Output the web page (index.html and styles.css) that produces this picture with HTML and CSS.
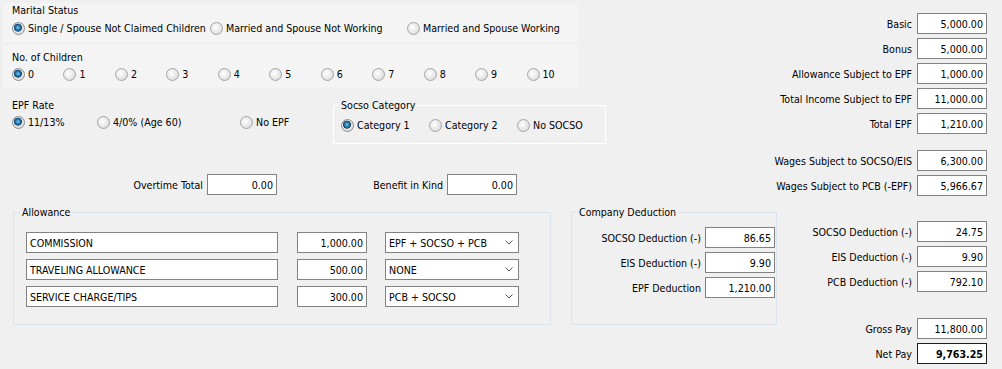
FILE: index.html
```html
<!DOCTYPE html>
<html>
<head>
    <meta charset="utf-8">
    <title>Payroll Calculator</title>
    <link rel="stylesheet" href="styles.css">
</head>
<body>
    <div class="form">
        <div class="left">
            <div class="panel marital">
                <div class="caption">Marital Status</div>
                <div class="opts marital-opts">
                    <label class="opt"><span class="radio checked"></span>Single / Spouse Not Claimed Children</label>
                    <label class="opt"><span class="radio"></span>Married and Spouse Not Working</label>
                    <label class="opt"><span class="radio"></span>Married and Spouse Working</label>
                </div>
            </div>
            <div class="panel children">
                <div class="caption">No. of Children</div>
                <div class="opts children-opts">
                    <label class="opt"><span class="radio checked"></span>0</label>
                    <label class="opt"><span class="radio"></span>1</label>
                    <label class="opt"><span class="radio"></span>2</label>
                    <label class="opt"><span class="radio"></span>3</label>
                    <label class="opt"><span class="radio"></span>4</label>
                    <label class="opt"><span class="radio"></span>5</label>
                    <label class="opt"><span class="radio"></span>6</label>
                    <label class="opt"><span class="radio"></span>7</label>
                    <label class="opt"><span class="radio"></span>8</label>
                    <label class="opt"><span class="radio"></span>9</label>
                    <label class="opt"><span class="radio"></span>10</label>
                </div>
            </div>
            <div class="epf-row">
                <div class="panel epf">
                    <div class="caption">EPF Rate</div>
                    <div class="opts epf-opts">
                        <label class="opt"><span class="radio checked"></span>11/13%</label>
                        <label class="opt"><span class="radio"></span>4/0% (Age 60)</label>
                        <label class="opt"><span class="radio"></span>No EPF</label>
                    </div>
                </div>
                <fieldset class="group socso">
                    <legend>Socso Category</legend>
                    <div class="opts socso-opts">
                        <label class="opt"><span class="radio checked"></span>Category 1</label>
                        <label class="opt"><span class="radio"></span>Category 2</label>
                        <label class="opt"><span class="radio"></span>No SOCSO</label>
                    </div>
                </fieldset>
            </div>
            <div class="extra-row">
                <div class="field overtime">
                    <span>Overtime Total</span>
                    <input type="text" class="num" value="0.00">
                </div>
                <div class="field bik">
                    <span>Benefit in Kind</span>
                    <input type="text" class="num" value="0.00">
                </div>
            </div>
            <div class="groups">
                <fieldset class="group allowance">
                    <legend>Allowance</legend>
                    <div class="allow-row">
                        <input type="text" class="name" value="COMMISSION">
                        <input type="text" class="num" value="1,000.00">
                        <div class="combo"><span>EPF + SOCSO + PCB</span><svg width="8" height="5" viewBox="0 0 8 5"><path d="M0.5 0.5 L4 4 L7.5 0.5" fill="none" stroke="#555" stroke-width="1"/></svg></div>
                    </div>
                    <div class="allow-row">
                        <input type="text" class="name" value="TRAVELING ALLOWANCE">
                        <input type="text" class="num" value="500.00">
                        <div class="combo"><span>NONE</span><svg width="8" height="5" viewBox="0 0 8 5"><path d="M0.5 0.5 L4 4 L7.5 0.5" fill="none" stroke="#555" stroke-width="1"/></svg></div>
                    </div>
                    <div class="allow-row">
                        <input type="text" class="name" value="SERVICE CHARGE/TIPS">
                        <input type="text" class="num" value="300.00">
                        <div class="combo"><span>PCB + SOCSO</span><svg width="8" height="5" viewBox="0 0 8 5"><path d="M0.5 0.5 L4 4 L7.5 0.5" fill="none" stroke="#555" stroke-width="1"/></svg></div>
                    </div>
                </fieldset>
                <fieldset class="group company">
                    <legend>Company Deduction</legend>
                    <div class="field"><span>SOCSO Deduction (-)</span><input type="text" class="num" value="86.65"></div>
                    <div class="field"><span>EIS Deduction (-)</span><input type="text" class="num" value="9.90"></div>
                    <div class="field"><span>EPF Deduction</span><input type="text" class="num" value="1,210.00"></div>
                </fieldset>
            </div>
        </div>

        <div class="right">
            <div class="rgroup">
                <div class="field"><span>Basic</span><input type="text" class="num" value="5,000.00"></div>
                <div class="field"><span>Bonus</span><input type="text" class="num" value="5,000.00"></div>
                <div class="field"><span>Allowance Subject to EPF</span><input type="text" class="num" value="1,000.00"></div>
                <div class="field"><span>Total Income Subject to EPF</span><input type="text" class="num" value="11,000.00"></div>
                <div class="field"><span>Total EPF</span><input type="text" class="num" value="1,210.00"></div>
            </div>
            <div class="rgroup wages">
                <div class="field"><span>Wages Subject to SOCSO/EIS</span><input type="text" class="num" value="6,300.00"></div>
                <div class="field"><span>Wages Subject to PCB (-EPF)</span><input type="text" class="num" value="5,966.67"></div>
            </div>
            <div class="rgroup deductions">
                <div class="field"><span>SOCSO Deduction (-)</span><input type="text" class="num" value="24.75"></div>
                <div class="field"><span>EIS Deduction (-)</span><input type="text" class="num" value="9.90"></div>
                <div class="field"><span>PCB Deduction (-)</span><input type="text" class="num" value="792.10"></div>
            </div>
            <div class="rgroup totals">
                <div class="field"><span>Gross Pay</span><input type="text" class="num" value="11,800.00"></div>
                <div class="field"><span>Net Pay</span><input type="text" class="num net" value="9,763.25"></div>
            </div>
        </div>
    </div>
</body>
</html>
```

FILE: styles.css
```css
body {
    margin: 0;
    padding: 0;
    background-color: #f0f0f0;
    font-family: "DejaVu Sans Condensed", "Liberation Sans", Arial, sans-serif;
    font-size: 10.6px;
    color: #000;
}
.form {
    display: grid;
    grid-template-columns: 760px 1fr;
    height: 369px;
}
.left {
    display: flex;
    flex-direction: column;
    width: 780px;
}
.panel {
    box-sizing: border-box;
    padding-left: 9px;
}
.caption {
    line-height: 13px;
    height: 13px;
}
.marital {
    margin: 3px 0 0 3px;
    width: 575px;
    height: 39px;
    padding-top: 1px;
    background-color: #f4f4f4;
}
.children {
    margin: 3px 0 0 3px;
    width: 575px;
    height: 43px;
    padding-top: 6px;
    background-color: #f4f4f4;
}
.opts {
    display: flex;
    align-items: center;
    height: 16px;
    margin-top: 3px;
}
.children .opts {
    margin-top: 2px;
}
.opt {
    display: flex;
    align-items: center;
    gap: 3px;
    white-space: nowrap;
}
.marital-opts .opt:nth-child(1) { width: 198px; }
.marital-opts .opt:nth-child(2) { width: 197px; }
.children-opts .opt { width: 53px; }
.radio {
    display: inline-block;
    width: 13px;
    height: 13px;
    box-sizing: border-box;
    border-radius: 50%;
    border: 1px solid #a4a4a4;
    background: radial-gradient(circle at 40% 40%, #ffffff 0, #f2f2f2 30%, #d2d2d2 100%);
    flex-shrink: 0;
}
.radio.checked {
    border-color: #8c8c8c;
    background:
        radial-gradient(circle at 45% 42%, #8fd3f5 0, #2f86b8 1.8px, #1c5a86 3.2px, #1a4e77 3.8px, rgba(0,0,0,0) 4.3px),
        radial-gradient(circle at 40% 40%, #ffffff 0, #f2f2f2 30%, #d2d2d2 100%);
}
.epf-row {
    display: flex;
    margin-top: 11px;
}
.epf {
    margin-left: 3px;
    width: 300px;
    padding-top: 0;
}
.epf .opts {
    margin-top: 2px;
}
.epf-opts .opt:nth-child(1) { width: 85px; }
.epf-opts .opt:nth-child(2) { width: 143px; }
.group {
    margin: 0;
    padding: 0;
    border: 1px solid #dce5ed;
    min-width: 0;
    box-sizing: border-box;
}
.group legend {
    padding: 0 2px;
    margin-left: 5px;
    line-height: 13px;
}
.socso {
    margin-left: 30px;
    width: 273px;
    height: 45px;
    border-color: #ffffff;
    padding: 5px 0 0 7px;
}
.socso legend {
    margin-left: -2px;
}
.socso-opts {
    margin-top: 0;
}
.socso-opts .opt:nth-child(1) { width: 88px; }
.socso-opts .opt:nth-child(2) { width: 88px; }
.extra-row {
    display: flex;
    margin-top: 30px;
}
.field {
    display: flex;
    align-items: center;
    justify-content: flex-end;
    gap: 4px;
    white-space: nowrap;
}
.overtime { width: 277px; }
.bik { width: 240px; }
input {
    font-family: inherit;
    font-size: 10.6px;
    color: #000;
    height: 21px;
    box-sizing: border-box;
    border: 1px solid #828282;
    background-color: #fff;
    padding: 0 3px;
    margin: 0;
    outline: none;
}
.num {
    width: 70px;
    text-align: right;
}
.net {
    border-color: #1e1e1e;
    font-weight: bold;
}
.groups {
    display: flex;
    margin-top: 11px;
}
.allowance {
    margin-left: 13px;
    width: 538px;
    height: 119px;
    padding: 13px 0 0 12px;
}
.allowance legend {
    margin-left: -6px;
}
.allow-row {
    display: flex;
    margin-bottom: 6px;
}
.name {
    width: 252px;
    margin-right: 19px;
}
.allow-row .num {
    margin-right: 18px;
}
.combo {
    width: 134px;
    height: 21px;
    box-sizing: border-box;
    border: 1px solid #828282;
    background-color: #fff;
    display: flex;
    align-items: center;
    justify-content: space-between;
    padding: 0 5px 0 3px;
}
.company {
    margin-left: 20px;
    width: 206px;
    height: 119px;
    padding: 8px 1px 0 0;
}
.company .field {
    margin-bottom: 4px;
}
.right {
    display: flex;
    flex-direction: column;
    align-items: flex-end;
    padding: 13px 15px 0 0;
}
.rgroup {
    display: flex;
    flex-direction: column;
    gap: 4px;
}
.rgroup .field {
    gap: 5px;
}
.wages { margin-top: 16px; }
.deductions { margin-top: 25px; }
.totals { margin-top: 26px; }
```
